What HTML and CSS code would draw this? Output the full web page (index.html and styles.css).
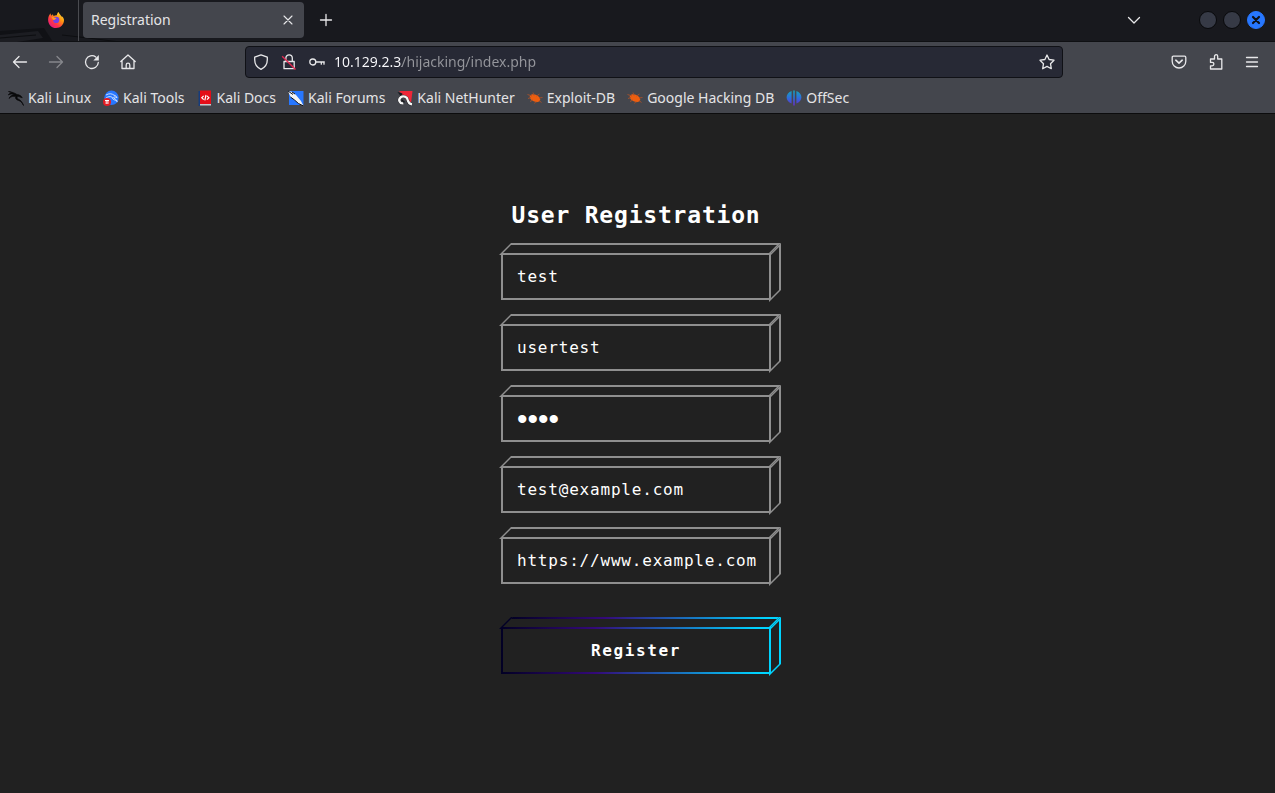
FILE: index.html
```html
<!DOCTYPE html>
<html lang="en">
<head>
<meta charset="utf-8">
<meta name="viewport" content="width=device-width, initial-scale=1">
<title>Registration</title>
<link rel="stylesheet" href="styles.css">
</head>
<body>
<header class="chrome">
  <div class="tabbar">
    <svg class="wallpaper" viewBox="0 0 130 42" aria-hidden="true"><path d="M0 31l44-3 9 14H0z" fill="#101115"/><path d="M0 35l38-4 5 7-26 4H0z" fill="#1c1d22"/><path d="M0 38l36-3M62 35l26 3 32 4" stroke="#0d0e11" fill="none"/></svg>
    <div class="pinned">
      <button class="icon-btn" aria-label="Firefox View">
        <svg width="16" height="16" viewBox="0 0 16 16">
          <defs>
            <linearGradient id="flame" x1="1" y1="0" x2=".2" y2="1"><stop offset="0" stop-color="#fff44f"/><stop offset=".4" stop-color="#ff980e"/><stop offset=".7" stop-color="#ff3647"/><stop offset="1" stop-color="#e31587"/></linearGradient>
          </defs>
          <path d="M15.5 6.2c-.4-1-1.200-1.900-1.900-2.300.3.700.5 1.300.5 1.700C13 3 11.500 2.300 10.500 0 9.600.600 8.900 2 8.900 3.300 7.400 3.200 6.500 3.500 5.800 4 5.300 3.700 5 2.900 5 2.200 4.200 2.600 3.600 3.100 3.200 3.700 2.800 3.300 2.700 2.300 2.800 1.300 1 2.600.2 5.200.1 7.700.1 12.400 3.600 16 8 16c4.500 0 8-3.400 8-8 0-.6-.2-1.200-.5-1.800z" fill="url(#flame)"/>
          <circle cx="8.200" cy="7.900" r="3.100" fill="#7542e5"/>
          <path d="M3.500 5.300c1-.6 2.300-.5 3 .4 1 .1 2 .2 1.900.7-.1.500-1.500.7-1.800 1.300-.3.600-1.100.4-1.700-.2z" fill="#ff9a1f"/>
        </svg>
      </button>
    </div>
    <div class="tab">
      <span class="tab-title">Registration</span>
      <button class="icon-btn" aria-label="Close tab"><svg width="12" height="12" viewBox="0 0 12 12"><path d="M2 2l8 8M10 2l-8 8" class="stroke thin"/></svg></button>
    </div>
    <button class="icon-btn new-tab" aria-label="New tab"><svg width="14" height="14" viewBox="0 0 14 14"><path d="M7 1.500v11M1.500 7h11" class="stroke"/></svg></button>
    <button class="icon-btn all-tabs" aria-label="List all tabs"><svg width="14" height="14" viewBox="0 0 14 14"><path d="M1.500 4.500L7 10l5.500-5.500" class="stroke"/></svg></button>
    <div class="window-buttons">
      <button class="win" aria-label="Minimize"></button>
      <button class="win" aria-label="Maximize"></button>
      <button class="win win-close" aria-label="Close"><svg width="10" height="10" viewBox="0 0 10 10"><path d="M2 2l6 6M8 2l-6 6" stroke="#0e1016" stroke-width="2.200" stroke-linecap="round"/></svg></button>
    </div>
  </div>

  <nav class="toolbar" aria-label="Navigation">
    <div class="nav-buttons">
      <button class="icon-btn" aria-label="Back"><svg width="16" height="16" viewBox="0 0 16 16"><path d="M14.500 8H1.500M7 2.500L1.500 8 7 13.500" class="stroke"/></svg></button>
      <button class="icon-btn dim" aria-label="Forward"><svg width="16" height="16" viewBox="0 0 16 16"><path d="M1.500 8h13M9 2.500L14.500 8 9 13.500" class="stroke"/></svg></button>
      <button class="icon-btn" aria-label="Reload"><svg width="16" height="16" viewBox="0 0 16 16"><path d="M14.300 8.500A6.400 6.400 0 1 1 11.800 3" class="stroke"/><path d="M14.800 1v5.500H9.300z" fill="#e8e8ea"/></svg></button>
      <button class="icon-btn" aria-label="Home"><svg width="16" height="16" viewBox="0 0 16 16"><path d="M.8 7.500L8 1l7.200 6.500M2 6.500V14.500h12V6.500M6.200 14.500V11a1.800 1.800 0 0 1 3.600 0v3.500" class="stroke"/></svg></button>
    </div>
    <div class="urlbar">
      <button class="icon-btn" aria-label="Tracking protection"><svg width="16" height="16" viewBox="0 0 16 16"><path d="M8 .9l6.300 2.300v2.600C14.300 10.500 12 13.500 8 15.300 4 13.500 1.700 10.500 1.700 5.800V3.200z" class="stroke"/></svg></button>
      <button class="icon-btn" aria-label="Connection not secure"><svg width="16" height="16" viewBox="0 0 16 16"><path d="M3 7.500h10.200v7.200H3zM4.900 7.300V4a3.200 3.200 0 0 1 6.400 0v3.300" class="stroke"/><path d="M1.200 2.200l13.300 13.300" stroke="#e22850" stroke-width="1.400"/></svg></button>
      <button class="icon-btn" aria-label="Saved login"><svg width="16" height="16" viewBox="0 0 16 16"><circle cx="3.800" cy="8" r="3" class="stroke"/><path d="M6.800 8h8.500M12.300 8v2.200M15 8v2.200" class="stroke"/></svg></button>
      <input class="url" type="text" value="10.129.2.3/hijacking/index.php" aria-label="Address">
      <button class="icon-btn" aria-label="Bookmark this page"><svg width="16" height="16" viewBox="0 0 16 16"><path d="M8 1l2.100 4.500 4.900.7-3.500 3.500.8 5L8 12.400l-4.300 2.300.8-5L1 6.200l4.900-.7z" class="stroke"/></svg></button>
    </div>
    <div class="tools">
      <button class="icon-btn" aria-label="Pocket"><svg width="16" height="16" viewBox="0 0 16 16"><path d="M2.400 2.200h11.200c.8 0 1.200.5 1.200 1.200V7.200a6.800 6.800 0 0 1-13.600 0V3.400c0-.7.4-1.200 1.200-1.200z" class="stroke"/><path d="M4.800 6.200L8 9.200l3.200-3" class="stroke bold"/></svg></button>
      <button class="icon-btn" aria-label="Extensions"><svg width="16" height="16" viewBox="0 0 16 16"><path d="M2.500 5h4V2.300a1.600 1.600 0 0 1 3.200 0V5h4.100v10H2.500v-3.200h1.700a1.600 1.600 0 0 0 0-3.400H2.500z" class="stroke"/></svg></button>
      <button class="icon-btn" aria-label="Menu"><svg width="14" height="14" viewBox="0 0 14 14"><path d="M1.500 2.500h11M1.500 7h11M1.500 11.500h11" class="stroke"/></svg></button>
    </div>
  </nav>

  <nav class="bookmarks" aria-label="Bookmarks">
    <a href="#"><svg width="16" height="16" viewBox="0 0 16 16"><path d="M.5 1.500C4 2 7 3 9 4.600c2.500.3 4.500 1.200 5.200 3.200L12 7c-1.500-.8-3-.4-3 .8 0 1.500 4.500 1.200 6.500 7.700-1.800-3.800-3.500-4.500-5-5-2.500-.8-3.500-2-2.700-3.900C5.500 6 2.800 6.300 1 8.500 2 6 4 4.800 6.500 4.700 4.500 3.500 2 3.800.3 5 1.500 3.200 3 3 4.600 3.100 3.500 2.400 2 2 .5 1.500z" fill="#08090a" stroke="#08090a" stroke-width=".7"/></svg>Kali Linux</a>
    <a href="#"><svg width="16" height="16" viewBox="0 0 16 16"><circle cx="8.500" cy="7.800" r="7.200" fill="#2777ff"/><path d="M3 5c3-1.800 6-1.500 8 .2 1.600.3 2.600 1.200 3 2.500-1.500-1-3.500-1-3.500 0s3 1 3.800 4c-1.800-2.200-5-1.500-5-4.300C7.500 6 4.500 6.500 2.500 8.500" fill="none" stroke="#dceaff" stroke-width=".9"/><circle cx="4" cy="12" r="4" fill="#e31b23"/><path d="M2 10.500h4M3.200 10.500v3.500M4.900 10.500v3.500" stroke="#fff"/></svg>Kali Tools</a>
    <a href="#"><svg width="16" height="16" viewBox="0 0 16 16"><path d="M1.500 1h2v15h-2z" fill="#163c7c"/><path d="M3 .5h11V14H3z" fill="#e40d18"/><path d="M3 14h11v1.500H3z" fill="#c8c8cc"/><path d="M6.700 5.800L4.800 7.700l1.900 1.900M10 5.800l1.900 1.900L10 9.600M9 5L7.800 10.300" fill="none" stroke="#fff" stroke-width="1.200"/></svg>Kali Docs</a>
    <a href="#"><svg width="16" height="16" viewBox="0 0 16 16"><path d="M1 1h14.500v14H1z" fill="#2777ff"/><path d="M0 1l4.500 1 3.500 3 5 6 2.500 5-5-2.500L6.500 10 2.500 7z" fill="#f3f3f3"/><path d="M0 1l5 3.500M2.500 7l4 3 4 3.500 5 2.500M4 2l3 2" fill="none" stroke="#111318"/></svg>Kali Forums</a>
    <a href="#"><svg width="16" height="16" viewBox="0 0 16 16"><path d="M2 1h13.500l-1.500 12-4-2-5-7z" fill="#ef2638"/><path d="M.5 2l5 1.500-1.500 3z" fill="#17181d"/><path d="M15 14.300c-3.300-.3-3.800-2.300-4.300-4.500-.6-3-4.500-4.500-7-2.500-3 2.600-.8 6.700 2.600 6" fill="none" stroke="#15161a" stroke-width="3"/><path d="M15 14.300c-3.300-.3-3.800-2.300-4.300-4.500-.6-3-4.500-4.500-7-2.500-3 2.600-.8 6.700 2.600 6" fill="none" stroke="#f7f7f7" stroke-width="2.400"/><path d="M4.500 9.800l3 2.500" stroke="#15161a" stroke-width="1.200"/></svg>Kali NetHunter</a>
    <a href="#"><svg width="16" height="16" viewBox="0 0 16 16"><use href="#bug"/></svg>Exploit-DB</a>
    <a href="#"><svg width="16" height="16" viewBox="0 0 16 16"><g id="bug"><ellipse cx="8" cy="8.200" rx="5.600" ry="3.500" transform="rotate(25 8 8.200)" fill="#ec5e10"/><path d="M.5 4.500L5 6M7 5.500L6 2.500M9.500 6l3-2M12 8l3.500-.5M12 10.500l2.500 2M4 7.500L1 8.500M6 10l-3 1.500M9 11.500l-1.500 2" stroke="#a95028" fill="none" stroke-width=".9"/></g></svg>Google Hacking DB</a>
    <a href="#"><svg width="16" height="16" viewBox="0 0 16 16"><defs><linearGradient id="off" gradientUnits="userSpaceOnUse" x1="0" y1="0" x2="0" y2="16"><stop offset="0" stop-color="#12a8b8"/><stop offset=".5" stop-color="#2e6ddb"/><stop offset="1" stop-color="#6a28c8"/></linearGradient></defs><path d="M5.600 1v12.500C2.500 12.500.6 10 .6 7.200S2.600 2 5.600 1zM10.400 1v12.500c3.100-1 5-3.500 5-6.300s-2-5.200-5-6.200zM7.200.5h1.600v15H7.200z" fill="url(#off)"/></svg>OffSec</a>
  </nav>
</header>

<main class="page">
  <form class="form">
    <h1 class="heading">User Registration</h1>
    <label class="box"><input class="field" type="text" value="test" aria-label="Name"></label>
    <label class="box"><input class="field" type="text" value="usertest" aria-label="Username"></label>
    <label class="box"><input class="field secret" type="password" value="test" aria-label="Password"></label>
    <label class="box"><input class="field" type="email" value="test@example.com" aria-label="Email"></label>
    <label class="box"><input class="field" type="url" value="https://www.example.com" aria-label="Profile picture URL"></label>
    <div class="box box-action"><button class="field submit" type="button">Register</button></div>
  </form>
</main>
</body>
</html>
```

FILE: styles.css
```css
*,
*::before,
*::after { box-sizing: border-box; }

body {
  margin: 0;
  min-height: 100vh;
  display: flex;
  flex-direction: column;
  background: #212121;
  color: #fff;
}

.chrome {
  background: #44464d;
  color: #e4e4e6;
  font: 14px/20px "Noto Sans", sans-serif;
  border-bottom: 1px solid #0c0c0d;
}

.icon-btn {
  display: flex;
  padding: 0;
  border: 0;
  background: none;
  color: inherit;
}

.dim { opacity: 0.4; }

.stroke {
  fill: none;
  stroke: #e8e8ea;
  stroke-width: 1.3;
  stroke-linecap: round;
  stroke-linejoin: round;
}

.bold { stroke-width: 1.6; }
.thin { stroke-width: 1.1; }

/* Tab strip */
.tabbar {
  position: relative;
  display: flex;
  align-items: center;
  height: 42px;
  padding: 0 10px 2px 0;
  background: #18191e;
  border-bottom: 1px solid #0f1013;
}

.wallpaper {
  position: absolute;
  left: 0;
  top: 0;
  width: 130px;
  height: 42px;
}

.pinned {
  position: relative;
  display: flex;
  align-items: center;
  justify-content: flex-end;
  align-self: stretch;
  width: 79px;
  margin-bottom: -2px;
  padding: 0 14px 2px 0;
  border-right: 1px solid #4a4b50;
}

.tab {
  position: relative;
  display: flex;
  align-items: center;
  justify-content: space-between;
  width: 221px;
  height: 36px;
  margin-left: 4px;
  padding: 0 10px 0 8px;
  border-radius: 4px;
  background: #44464d;
}

.new-tab { margin-left: 15px; }
.all-tabs { margin-left: auto; }

.window-buttons {
  display: flex;
  align-items: center;
  gap: 6px;
  margin-left: 58px;
}

.win {
  display: flex;
  align-items: center;
  justify-content: center;
  width: 18px;
  height: 18px;
  padding: 0;
  border: 1px solid #08090b;
  border-radius: 50%;
  background: #363a46;
}

.win-close {
  border-color: #2777ff;
  background: #2777ff;
}

/* Navigation toolbar */
.toolbar {
  display: flex;
  align-items: center;
  justify-content: space-between;
  height: 40px;
  padding: 0 16px 0 12px;
}

.nav-buttons { display: flex; gap: 20px; }

.tools {
  display: flex;
  align-items: center;
  gap: 21px;
  margin-left: 108px;
}

.urlbar {
  flex: 1;
  display: flex;
  align-items: center;
  gap: 12px;
  height: 32px;
  margin-left: 109px;
  padding: 0 7px;
  border: 1px solid #101116;
  border-radius: 4px;
  background: #272935;
}

.url {
  flex: 1;
  min-width: 0;
  margin-left: -3px;
  padding: 0;
  border: 0;
  outline: 0;
  font: inherit;
  color: transparent;
  caret-color: #fff;
  background: linear-gradient(to right, #fbfbfe 68px, #95969c 68px);
  background-clip: text;
  -webkit-background-clip: text;
}

/* Bookmarks toolbar */
.bookmarks {
  display: flex;
  align-items: center;
  gap: 12px;
  height: 31px;
  padding: 0 8px;
}

.bookmarks a {
  display: flex;
  align-items: center;
  gap: 4px;
  color: inherit;
  text-decoration: none;
  white-space: nowrap;
}

/* Registration page */
.page {
  flex: 1;
  display: flex;
  align-items: center;
  justify-content: center;
  padding: 0 3px 32px 0;
  font: 16px/20px "DejaVu Sans Mono", monospace;
  letter-spacing: 0.8px;
}

.form {
  display: flex;
  flex-direction: column;
  gap: 24px;
  width: 270px;
}

.heading {
  margin: 0;
  font-size: 23px;
  line-height: 28px;
  text-align: center;
  white-space: nowrap;
}

.box {
  position: relative;
  display: block;
  --edge: #8f8f8f;
}

.box-action {
  margin-top: 19px;
  --edge: #00d4ff;
}

.field {
  display: block;
  width: 100%;
  height: 47px;
  padding: 0 12px 0 14px;
  border: 2px solid var(--edge);
  border-radius: 0;
  outline: 0;
  background: #212121;
  color: #fff;
  font: inherit;
  letter-spacing: inherit;
}

/* Large mask dots */
.secret {
  font: 30px/40px "Liberation Sans", sans-serif;
  letter-spacing: normal;
}

.box::before,
.box::after {
  content: "";
  position: absolute;
  border: 2px solid var(--edge);
  pointer-events: none;
}

/* Top face of the box */
.box::before {
  left: 0;
  top: -10px;
  width: 100%;
  height: 12px;
  transform: skewX(-45deg);
  transform-origin: left 10px;
}

/* Side face of the box */
.box::after {
  top: 0;
  right: -10px;
  width: 12px;
  height: 100%;
  transform: skewY(-45deg);
  transform-origin: 2px top;
}

.submit,
.box-action::before {
  border-image: linear-gradient(to right, #020024, #340979 35%, #00d4ff 95%) 2;
}

.submit {
  padding: 0 14px;
  font-weight: bold;
  letter-spacing: 1.6px;
}
```
